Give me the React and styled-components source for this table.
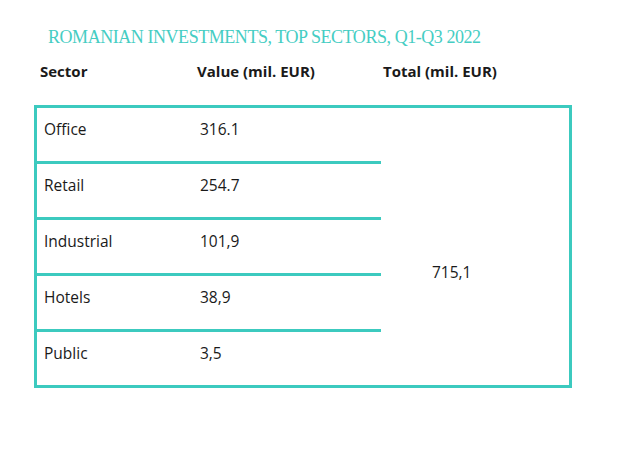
import React from 'react';
import styled, { createGlobalStyle } from 'styled-components';

const GlobalStyle = createGlobalStyle`
  html, body {
    margin: 0;
    padding: 0;
    background: #ffffff;
  }
`;

const TEAL = '#3ccabf';

const Page = styled.div`
  width: 640px;
  height: 456px;
  box-sizing: border-box;
  padding: 26px 0 0 34px;
  font-family: "Open Sans", "Liberation Sans", sans-serif;
  color: #1a1a1a;
`;

const Title = styled.h1`
  margin: 0 0 0 14px;
  font-family: "Liberation Serif", serif;
  font-weight: normal;
  font-size: 18px;
  letter-spacing: -0.45px;
  line-height: 23px;
  color: #45cdc3;
  white-space: nowrap;
`;

const HeaderRow = styled.div`
  display: grid;
  grid-template-columns: 157px 186px 1fr;
  width: 538px;
  margin-top: 12px;
  padding-left: 6px;
  box-sizing: border-box;
`;

const HeaderCell = styled.div`
  font-weight: 700;
  font-size: 15px;
  line-height: 20px;
`;

const Table = styled.div`
  display: grid;
  grid-template-columns: 156px 188px 1fr;
  grid-template-rows: repeat(4, 56px) 53px;
  width: 538px;
  margin-top: 24px;
  border: 3px solid ${TEAL};
  box-sizing: border-box;
`;

const Cell = styled.div`
  font-size: 15.5px;
  line-height: 21px;
  padding: 11px 0 0 ${p => p.$pad}px;
  border-bottom: ${p => (p.$last ? 'none' : `3px solid ${TEAL}`)};
`;

const TotalCell = styled.div`
  grid-column: 3;
  grid-row: 1 / span 5;
  font-size: 15.5px;
  line-height: 21px;
  padding: 154px 0 0 51px;
`;

const rows = [
  ['Office', '316.1'],
  ['Retail', '254.7'],
  ['Industrial', '101,9'],
  ['Hotels', '38,9'],
  ['Public', '3,5'],
];

export default function App() {
  return (
    <>
      <GlobalStyle />
      <Page>
        <Title>ROMANIAN INVESTMENTS, TOP SECTORS, Q1-Q3 2022</Title>
        <HeaderRow>
          <HeaderCell>Sector</HeaderCell>
          <HeaderCell>Value (mil. EUR)</HeaderCell>
          <HeaderCell>Total (mil. EUR)</HeaderCell>
        </HeaderRow>
        <Table>
          {rows.map(([sector, value], i) => (
            <React.Fragment key={sector}>
              <Cell $pad={7} $last={i === rows.length - 1} style={{ gridRow: i + 1 }}>
                {sector}
              </Cell>
              <Cell $pad={7} $last={i === rows.length - 1} style={{ gridRow: i + 1 }}>
                {value}
              </Cell>
            </React.Fragment>
          ))}
          <TotalCell>715,1</TotalCell>
        </Table>
      </Page>
    </>
  );
}
